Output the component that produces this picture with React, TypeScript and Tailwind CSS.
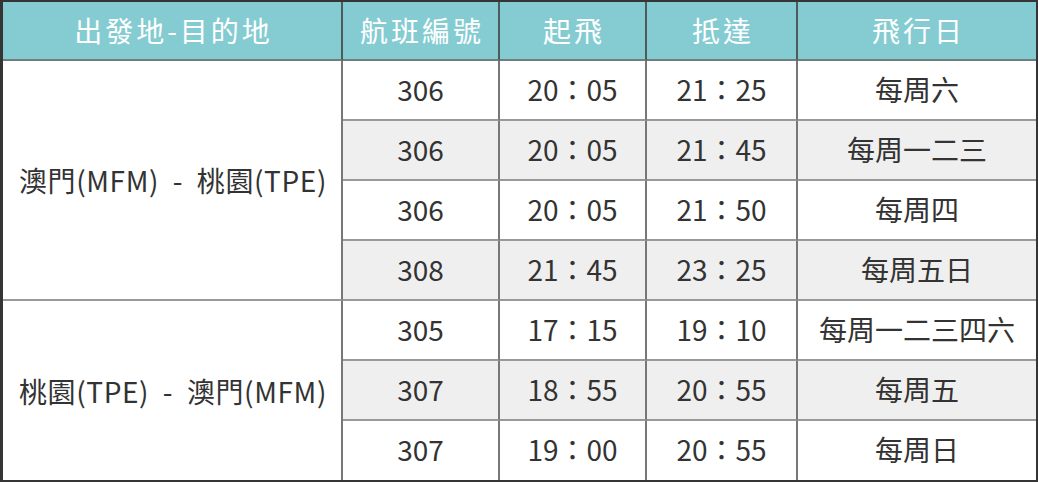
const groups = [
  {
    route: '澳門(MFM) - 桃園(TPE)',
    flights: [
      ['306', '20：05', '21：25', '每周六'],
      ['306', '20：05', '21：45', '每周一二三'],
      ['306', '20：05', '21：50', '每周四'],
      ['308', '21：45', '23：25', '每周五日'],
    ],
  },
  {
    route: '桃園(TPE) - 澳門(MFM)',
    flights: [
      ['305', '17：15', '19：10', '每周一二三四六'],
      ['307', '18：55', '20：55', '每周五'],
      ['307', '19：00', '20：55', '每周日'],
    ],
  },
];

export default function App() {
  let rowIndex = 0;
  const total = groups.reduce((n, g) => n + g.flights.length, 0);

  return (
    <div
      className="w-[1038px] h-[482px] bg-[#353535] pt-[2px] pl-[3px] pr-[2px] pb-[2px]"
      style={{ fontFamily: '"Noto Sans CJK TC", "Noto Sans", sans-serif' }}
    >
      <table className="w-[1033px] h-[478px] table-fixed border-separate border-spacing-0 bg-white text-[28px] text-[#333] leading-none">
        <colgroup>
          <col className="w-[340px]" />
          <col className="w-[157px]" />
          <col className="w-[147px]" />
          <col className="w-[151px]" />
          <col className="w-[238px]" />
        </colgroup>
        <thead>
          <tr className="h-[59px] bg-[#84ccd2] text-white">
            {['出發地-目的地', '航班編號', '起飛', '抵達', '飛行日'].map((h, i) => (
              <th
                key={h}
                className={`font-normal text-center tracking-[3px] pl-[3px] pb-[2px] border-b-2 border-[#6f7d7e] ${i < 4 ? 'border-r-2 border-r-[#4f5a5b]' : ''}`}
              >
                {h}
              </th>
            ))}
          </tr>
        </thead>
        <tbody>
          {groups.map((g, gi) =>
            g.flights.map((f, fi) => {
              const idx = rowIndex++;
              const last = idx === total - 1;
              const shaded = idx % 2 === 1;
              return (
                <tr key={`${gi}-${fi}`} className={last ? 'h-[59px]' : 'h-[60px]'}>
                  {fi === 0 && (
                    <td
                      rowSpan={g.flights.length}
                      className={`bg-white text-center whitespace-pre tracking-[0.6px] pl-[2px] border-r-2 border-r-[#777] ${gi < groups.length - 1 ? 'border-b-2 border-b-[#999]' : ''}`}
                    >
                      {g.route.replace(' - ', '  -  ')}
                    </td>
                  )}
                  {f.map((c, ci) => (
                    <td
                      key={ci}
                      className={`text-center pb-[3px] ${shaded ? 'bg-[#efefef]' : 'bg-white'} ${last ? '' : 'border-b-2 border-b-[#999]'} ${ci < 3 ? 'border-r-2 border-r-[#777]' : ''}`}
                    >
                      {c}
                    </td>
                  ))}
                </tr>
              );
            })
          )}
        </tbody>
      </table>
    </div>
  );
}
